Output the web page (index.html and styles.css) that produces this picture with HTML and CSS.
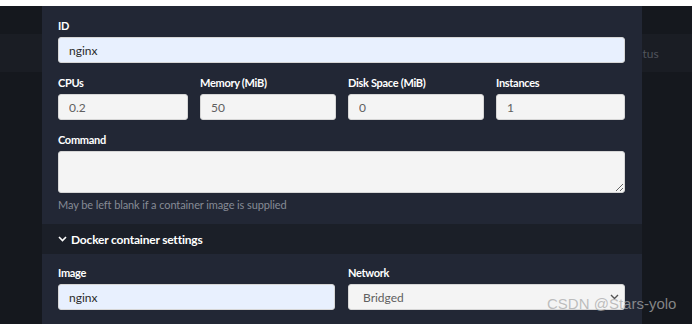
FILE: index.html
```html
<!DOCTYPE html>
<html lang="en">
<head>
    <meta charset="UTF-8">
    <title>New Application</title>
    <link rel="stylesheet" href="styles.css">
</head>
<body>
    <div class="page">
        <div class="table-head"><span class="col-status">Status</span></div>

        <div class="modal">
            <div class="field">
                <label>ID</label>
                <input class="input autofill" value="nginx">
            </div>

            <div class="row-4">
                <div class="field">
                    <label>CPUs</label>
                    <input class="input" value="0.2">
                </div>
                <div class="field">
                    <label>Memory (MiB)</label>
                    <input class="input" value="50">
                </div>
                <div class="field">
                    <label>Disk Space (MiB)</label>
                    <input class="input" value="0">
                </div>
                <div class="field">
                    <label>Instances</label>
                    <input class="input" value="1">
                </div>
            </div>

            <div class="field field-last">
                <label>Command</label>
                <textarea class="input textarea"></textarea>
                <p class="help">May be left blank if a container image is supplied</p>
            </div>

            <div class="section-head">
                <svg class="chev" width="9" height="6" viewBox="0 0 9 6"><polyline points="1,1 4.5,4.5 8,1" fill="none" stroke="#fff" stroke-width="1.6"/></svg>
                Docker container settings
            </div>

            <div class="row-2">
                <div class="field">
                    <label>Image</label>
                    <input class="input autofill" value="nginx">
                </div>
                <div class="field">
                    <label>Network</label>
                    <div class="input select">
                        <span>Bridged</span>
                        <svg width="9" height="6" viewBox="0 0 9 6"><polyline points="1,1 4.5,4.5 8,1" fill="none" stroke="#555" stroke-width="1.4"/></svg>
                    </div>
                </div>
            </div>
        </div>

        <div class="watermark">CSDN @Stars-yolo</div>
    </div>
</body>
</html>
```

FILE: styles.css
```css
html, body {
    margin: 0;
    background: #ffffff;
}

.page {
    position: relative;
    margin-top: 6px;
    height: 318px;
    background: #15181e;
    overflow: hidden;
    font-family: Lato, "Noto Sans", sans-serif;
}

/* the list behind the dialog */
.table-head {
    margin-top: 28px;
    height: 38px;
    background: #1a1d24;
    display: flex;
    align-items: center;
}

.col-status {
    margin-left: 626px;
    color: #50545d;
    font-size: 12px;
}

.modal {
    position: absolute;
    top: 0;
    left: 42px;
    width: 600px;
    height: 318px;
    box-sizing: border-box;
    padding: 12px 17px 0 16px;
    background: #222735;
}

.field {
    margin-bottom: 12px;
}

.field label {
    display: block;
    color: #ffffff;
    font-size: 11px;
    font-weight: bold;
    letter-spacing: -0.3px;
    line-height: 16px;
    margin-bottom: 3px;
}

.input {
    display: block;
    width: 100%;
    height: 26px;
    box-sizing: border-box;
    margin: 0;
    padding: 0 10px;
    border: 1px solid #d6d6d6;
    border-radius: 3px;
    background: #f4f4f4;
    color: #606060;
    font-family: inherit;
    font-size: 12px;
    outline: none;
}

.autofill {
    background: #e8f0fe;
    color: #2a2a2a;
}

.textarea {
    height: 42px;
    resize: vertical;
}

.help {
    margin: 4px 0 0;
    color: #868b96;
    font-size: 11px;
    letter-spacing: -0.1px;
    line-height: 16px;
}

.field-last {
    margin-bottom: 11px;
}

.row-4 {
    display: grid;
    grid-template-columns: 130px 136px 136px 1fr;
    column-gap: 12px;
}

.row-2 {
    display: grid;
    grid-template-columns: 1fr 1fr;
    column-gap: 13px;
}

.section-head {
    margin: 0 -17px 11px -16px;
    padding-left: 16px;
    height: 30px;
    display: flex;
    align-items: center;
    gap: 4px;
    background: #1b1f28;
    color: #ffffff;
    font-size: 12px;
    font-weight: bold;
    letter-spacing: -0.2px;
}

.select {
    display: flex;
    align-items: center;
    justify-content: space-between;
    padding: 0 5px 0 14px;
}

.watermark {
    position: absolute;
    left: 547px;
    top: 289px;
    color: rgba(170, 170, 170, 0.75);
    font-family: "Liberation Sans", Arial, sans-serif;
    font-size: 15px;
}
```
